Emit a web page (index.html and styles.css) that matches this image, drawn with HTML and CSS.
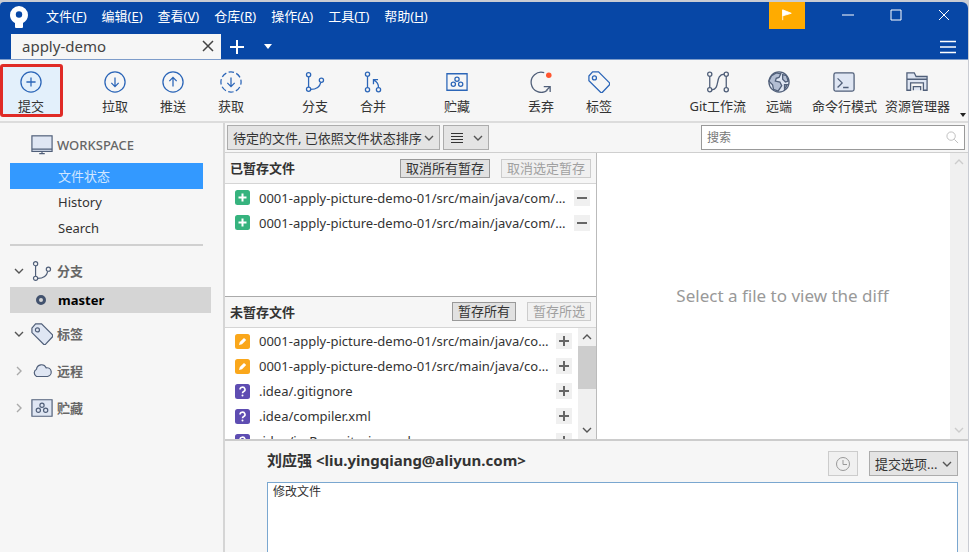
FILE: index.html
```html
<!DOCTYPE html>
<html lang="zh-CN">
<head>
    <meta charset="UTF-8">
    <meta name="viewport" content="width=device-width, initial-scale=1.0">
    <title>apply-demo</title>
    <link rel="stylesheet" href="styles.css">
</head>
<body>
    <svg class="sprite" aria-hidden="true">
        <symbol id="branch" viewBox="0 0 24 24">
            <circle cx="5" cy="4" r="2.3"/><circle cx="5" cy="20" r="2.3"/><circle cx="19" cy="10" r="2.3"/>
            <path d="M5 6.3v11.4M7.3 20c7 0 10-3 11-7.7"/>
        </symbol>
        <symbol id="tag" viewBox="0 0 24 24">
            <path d="M1 5.500L5 1h6.500L23.500 13v2l-8 8.500H14L1 10.500z"/><circle cx="7" cy="7.500" r="2.200"/>
        </symbol>
        <symbol id="stash" viewBox="0 0 24 24">
            <path d="M1 3h22v18H1z"/>
            <circle cx="12" cy="9" r="2.300"/><circle cx="8" cy="14.500" r="2.300"/><circle cx="16" cy="14.500" r="2.300"/>
        </symbol>
        <symbol id="chevron" viewBox="0 0 10 10"><path d="M1 3l4 4 4-4"/></symbol>
        <symbol id="added" viewBox="0 0 15 15">
            <rect width="15" height="15" rx="2.500" fill="#36b37e"/><path d="M7.500 3.500v8M3.500 7.500h8" stroke="#fff" stroke-width="2"/>
        </symbol>
        <symbol id="modified" viewBox="0 0 15 15">
            <rect width="15" height="15" rx="2.500" fill="#faa71b"/><path d="M4 11l.8-3L9 3.900l2.200 2.200L7 10.300z" fill="#fff"/>
        </symbol>
        <symbol id="unknown" viewBox="0 0 15 15">
            <rect width="15" height="15" rx="2.500" fill="#5e4db2"/>
            <path d="M5 5.500a2.500 2.300 0 1 1 3.700 2Q7.500 8 7.500 9.300" stroke="#fff" stroke-width="1.600" fill="none"/><circle cx="7.500" cy="11.600" r="1" fill="#fff"/>
        </symbol>
        <symbol id="plus" viewBox="0 0 12 12"><path d="M6 1v10M1 6h10"/></symbol>
    </svg>

    <div class="window">
        <header class="titlebar">
            <div class="menu-row">
                <svg class="logo" viewBox="0 0 18 22"><path d="M9 0a9 9 0 0 0-9 9c0 4 2.500 6.600 5 8v4q0 1 1 1h6q1 0 1-1v-4c3-1.500 5-4.500 5-8a9 9 0 0 0-9-9z" fill="#fff"/><circle cx="9" cy="8.500" r="3.200" fill="#0747a6"/></svg>
                <nav class="menu">
                    <a href="#">文件(<u>F</u>)</a>
                    <a href="#">编辑(<u>E</u>)</a>
                    <a href="#">查看(<u>V</u>)</a>
                    <a href="#">仓库(<u>R</u>)</a>
                    <a href="#">操作(<u>A</u>)</a>
                    <a href="#">工具(<u>T</u>)</a>
                    <a href="#">帮助(<u>H</u>)</a>
                </nav>
                <div class="window-buttons">
                    <button class="flag" aria-label="通知"><svg viewBox="0 0 12 14"><path d="M1 1v12" stroke="#fff"/><path d="M1 1l10 4L1 8z" fill="#fff"/></svg></button>
                    <button aria-label="最小化"><svg viewBox="0 0 12 12"><path d="M0 6h12"/></svg></button>
                    <button aria-label="最大化"><svg viewBox="0 0 12 12"><path d="M1 1h10v10H1z"/></svg></button>
                    <button aria-label="关闭"><svg viewBox="0 0 12 12"><path d="M1 1l10 10M11 1L1 11"/></svg></button>
                </div>
            </div>
            <div class="tab-row">
                <div class="tab">
                    <span>apply-demo</span>
                    <button aria-label="关闭标签页"><svg viewBox="0 0 12 12"><path d="M1 1l10 10M11 1L1 11"/></svg></button>
                </div>
                <button class="tab-add" aria-label="新建标签页"><svg viewBox="0 0 14 14"><path d="M7 0v14M0 7h14"/></svg></button>
                <button class="tab-more" aria-label="更多标签页"><svg viewBox="0 0 8 5"><path d="M0 0h8L4 5z"/></svg></button>
                <button class="hamburger" aria-label="菜单"><svg viewBox="0 0 16 14"><path d="M0 1.500h16M0 7h16M0 12.500h16"/></svg></button>
            </div>
        </header>

        <div class="toolbar">
            <div class="tool-group">
                <button class="tool active"><svg viewBox="0 0 24 24"><circle cx="12" cy="12" r="11"/><path d="M12 7v10M7 12h10"/></svg>提交</button>
            </div>
            <div class="tool-group">
                <button class="tool"><svg viewBox="0 0 24 24"><circle cx="12" cy="12" r="11"/><path d="M12 7v10M8 13l4 4 4-4"/></svg>拉取</button>
                <button class="tool"><svg viewBox="0 0 24 24"><circle cx="12" cy="12" r="11"/><path d="M12 17V7M8 11l4-4 4 4"/></svg>推送</button>
                <button class="tool"><svg viewBox="0 0 24 24"><circle cx="12" cy="12" r="11" stroke-dasharray="6 2.640" stroke-dashoffset="3"/><path d="M12 7v10M8 13l4 4 4-4"/></svg>获取</button>
            </div>
            <div class="tool-group">
                <button class="tool"><svg><use href="#branch"/></svg>分支</button>
                <button class="tool"><svg viewBox="0 0 24 24"><circle cx="6" cy="3.500" r="2.300"/><circle cx="6" cy="20.500" r="2.300"/><circle cx="18" cy="20.500" r="2.300"/><path d="M6 6v12M18 18c0-4-1-6-5-8M12.500 14.500V9.500h5"/></svg>合并</button>
            </div>
            <div class="tool-group">
                <button class="tool"><svg><use href="#stash"/></svg>贮藏</button>
            </div>
            <div class="tool-group">
                <button class="tool discard"><svg viewBox="0 0 24 24"><path d="M15.500 1.800A11 11 0 1 0 19 21M15 17h7v6M22 17l-4 4"/><circle class="dot" cx="20.500" cy="4.500" r="3"/></svg>丢弃</button>
                <button class="tool"><svg><use href="#tag"/></svg>标签</button>
            </div>
            <div class="tool-group right">
                <button class="tool gray"><svg viewBox="0 0 24 24"><circle cx="3" cy="3.500" r="2.300"/><circle cx="3" cy="20.500" r="2.300"/><circle cx="21" cy="3.500" r="2.300"/><circle cx="21" cy="20.500" r="2.300"/><path d="M3 6v12M21 6v12M5.300 20.500C15 20 8 4 18.700 3.500"/></svg>Git工作流</button>
                <button class="tool gray"><svg viewBox="0 0 24 24"><circle class="fill" cx="12" cy="12" r="11"/><path class="land" d="M4 5l5-3 5 1-2 4-3 1-1 3 5 1 2 4-4 6-5-2-1-5-4-4zM16 4l4 1 2 6-3 1-3-3zM18 15l3 0-3 5z"/></svg>远端</button>
                <button class="tool gray"><svg viewBox="0 0 24 24"><rect class="fill" x="1" y="2" width="22" height="20" rx="2"/><path d="M5 8l5 5-5 5M11 18h6"/></svg>命令行模式</button>
                <button class="tool gray"><svg viewBox="0 0 24 24"><path class="fill" d="M1 21V2h8l2 4h12v15h-4v-8H5v8zM1 9h22M8 21v-4h8v4"/></svg>资源管理器</button>
                <svg class="overflow" viewBox="0 0 6 4"><path d="M0 0h6L3 4z"/></svg>
            </div>
        </div>

        <div class="main">
            <aside class="sidebar">
                <section class="workspace">
                    <h2 class="group"><svg class="icon" viewBox="0 0 24 24"><rect class="fill" x="1" y="2" width="22" height="17"/><path d="M1 16.500h22M9 21.500h6M12 19v3"/></svg>WORKSPACE</h2>
                    <a class="item selected" href="#">文件状态</a>
                    <a class="item" href="#">History</a>
                    <a class="item" href="#">Search</a>
                </section>
                <section class="refs">
                    <h2 class="group cjk"><svg class="arrow"><use href="#chevron"/></svg><svg class="icon"><use href="#branch"/></svg>分支</h2>
                    <a class="item current" href="#"><span class="ring"></span>master</a>
                    <h2 class="group cjk"><svg class="arrow"><use href="#chevron"/></svg><svg class="icon fill"><use href="#tag"/></svg>标签</h2>
                    <h2 class="group cjk"><svg class="arrow closed"><use href="#chevron"/></svg><svg class="icon" viewBox="0 0 24 24"><path class="fill" d="M6 18a4.500 4.500 0 0 1 0-8 5.500 5.500 0 0 1 10.500-1.500A4.800 4.800 0 0 1 18 18z"/></svg>远程</h2>
                    <h2 class="group cjk"><svg class="arrow closed"><use href="#chevron"/></svg><svg class="icon fill"><use href="#stash"/></svg>贮藏</h2>
                </section>
            </aside>

            <div class="content">
                <div class="filter-bar">
                    <label class="select sort"><select aria-label="排序"><option>待定的文件, 已依照文件状态排序</option></select><svg class="arrow"><use href="#chevron"/></svg></label>
                    <button class="view-mode" aria-label="视图"><svg class="lines" viewBox="0 0 12 12"><path d="M0 1.500h12M0 4.500h12M0 7.500h12M0 10.500h12"/></svg><svg class="arrow"><use href="#chevron"/></svg></button>
                    <label class="search"><input type="text" placeholder="搜索" aria-label="搜索"><svg viewBox="0 0 14 14"><circle cx="5.500" cy="5.500" r="4.500"/><path d="M9 9l4 4"/></svg></label>
                </div>

                <div class="panes">
                    <div class="files">
                        <section class="file-pane">
                            <div class="pane-head">
                                <h3>已暂存文件</h3>
                                <button>取消所有暂存</button>
                                <button disabled>取消选定暂存</button>
                            </div>
                            <div class="pane-body">
                                <ul>
                                    <li><svg class="state"><use href="#added"/></svg><span>0001-apply-picture-demo-01/src/main/java/com/example/App.java</span><button aria-label="取消暂存"><svg viewBox="0 0 12 12"><path d="M1 6h10"/></svg></button></li>
                                    <li><svg class="state"><use href="#added"/></svg><span>0001-apply-picture-demo-01/src/main/java/com/example/Main.java</span><button aria-label="取消暂存"><svg viewBox="0 0 12 12"><path d="M1 6h10"/></svg></button></li>
                                </ul>
                            </div>
                        </section>
                        <section class="file-pane">
                            <div class="pane-head">
                                <h3>未暂存文件</h3>
                                <button>暂存所有</button>
                                <button disabled>暂存所选</button>
                            </div>
                            <div class="pane-body">
                                <ul>
                                    <li><svg class="state"><use href="#modified"/></svg><span>0001-apply-picture-demo-01/src/main/java/com/example/App.java</span><button aria-label="暂存"><svg><use href="#plus"/></svg></button></li>
                                    <li><svg class="state"><use href="#modified"/></svg><span>0001-apply-picture-demo-01/src/main/java/com/example/Main.java</span><button aria-label="暂存"><svg><use href="#plus"/></svg></button></li>
                                    <li><svg class="state"><use href="#unknown"/></svg><span>.idea/.gitignore</span><button aria-label="暂存"><svg><use href="#plus"/></svg></button></li>
                                    <li><svg class="state"><use href="#unknown"/></svg><span>.idea/compiler.xml</span><button aria-label="暂存"><svg><use href="#plus"/></svg></button></li>
                                    <li><svg class="state"><use href="#unknown"/></svg><span>.idea/jarRepositories.xml</span><button aria-label="暂存"><svg><use href="#plus"/></svg></button></li>
                                </ul>
                                <div class="scrollbar">
                                    <svg class="arrow up"><use href="#chevron"/></svg>
                                    <div class="thumb"></div>
                                    <svg class="arrow down"><use href="#chevron"/></svg>
                                </div>
                            </div>
                        </section>
                    </div>
                    <div class="diff">
                        <p>Select a file to view the diff</p>
                        <div class="scrollbar disabled">
                            <svg class="arrow up"><use href="#chevron"/></svg>
                            <svg class="arrow down"><use href="#chevron"/></svg>
                        </div>
                    </div>
                </div>

                <form class="commit">
                    <div class="commit-head">
                        <label for="message">刘应强 &lt;liu.yingqiang@aliyun.com&gt;</label>
                        <button class="history" type="button" aria-label="历史消息" disabled><svg viewBox="0 0 16 16"><circle cx="8" cy="8" r="6.500"/><path d="M8 4v4.500h4"/></svg></button>
                        <span class="select options"><select aria-label="提交选项"><option>提交选项...</option></select><svg class="arrow"><use href="#chevron"/></svg></span>
                    </div>
                    <textarea id="message">修改文件</textarea>
                </form>
            </div>
        </div>
    </div>
</body>
</html>
```
FILE: styles.css
```css
* {
    margin: 0;
    padding: 0;
    box-sizing: border-box;
}

body {
    height: 100vh;
    padding: 2px 1px 0 0;
    overflow: hidden;
    background: #c9ccd3;
    font-family: "Noto Sans", "Noto Sans CJK SC", sans-serif;
    font-size: 13px;
    line-height: 18px;
    color: #333;
}

button, select, input, textarea {
    font: inherit;
    color: inherit;
}

button {
    background: none;
    border: none;
}

a {
    color: inherit;
    text-decoration: none;
}

svg {
    fill: none;
    stroke: currentColor;
    flex: none;
}

.sprite {
    position: absolute;
    width: 0;
    height: 0;
}

.window {
    display: flex;
    flex-direction: column;
    height: 100%;
    background: #f6f6f6;
    border-radius: 4px 6px 0 0;
    overflow: hidden;
}

/* title bar */
.titlebar {
    background: #0747a6;
    color: #fff;
    border-bottom: 1px solid #7d9cca;
}

.menu-row {
    display: flex;
    height: 32px;
    padding-left: 10px;
}

.logo {
    width: 18px;
    height: 22px;
    margin-top: 4px;
    stroke: none;
}

.menu {
    display: flex;
    gap: 15px;
    padding: 5px 0 0 18px;
}

.window-buttons {
    display: flex;
    margin-left: auto;
}

.window-buttons button {
    width: 48px;
    height: 27px;
}

.window-buttons svg {
    width: 12px;
    height: 12px;
}

.window-buttons .flag {
    width: 36px;
    margin-right: 19px;
    background: #ffab00;
}

.tab-row {
    display: flex;
    align-items: center;
    height: 25px;
    padding: 0 12px 0 11px;
}

.tab {
    display: flex;
    align-items: center;
    justify-content: space-between;
    width: 210px;
    height: 100%;
    padding: 0 7px 2px 11px;
    background: #f6f6f6;
    color: #444;
    font-size: 15px;
}

.tab svg {
    width: 12px;
    height: 12px;
    stroke-width: 1.5;
    display: block;
}

.tab-add {
    margin-left: 9px;
}

.tab-add svg {
    width: 14px;
    height: 14px;
    stroke-width: 2;
    display: block;
}

.tab-more {
    margin-left: 20px;
}

.tab-more svg {
    width: 8px;
    height: 5px;
    fill: #fff;
    stroke: none;
    display: block;
}

.hamburger {
    margin-left: auto;
}

.hamburger svg {
    width: 16px;
    height: 14px;
    stroke-width: 1.5;
    display: block;
}

/* toolbar */
.toolbar {
    display: flex;
    gap: 26px;
    height: 63px;
    padding: 4px 14px 0 2px;
    border-bottom: 2px solid #dcdcdc;
}

.tool-group {
    display: flex;
}

.tool {
    display: flex;
    flex-direction: column;
    align-items: center;
    gap: 4px;
    min-width: 58px;
    height: 52px;
    padding: 7px 4px 0;
    white-space: nowrap;
}

.tool svg {
    width: 22px;
    height: 22px;
    color: #2c66b8;
    stroke-width: 1.4;
}

.tool.gray svg, .tool.discard svg {
    color: #505f79;
}

.tool.active {
    position: relative;
    background: #e3f0fb;
}

.tool.active::after {
    content: '';
    position: absolute;
    inset: 0 -3px -1px -2px;
    border: 3px solid #e02b26;
    border-radius: 3px;
}

.dot {
    fill: #ff5630;
    stroke: none;
}

.fill {
    fill: #dfe6f3;
}

.land {
    fill: #b3bed3;
}

.tool-group.right {
    position: relative;
    margin-left: auto;
}

.overflow {
    position: absolute;
    right: -12px;
    bottom: 4px;
    width: 6px;
    height: 4px;
    fill: #222;
    stroke: none;
}

/* sidebar */
.main {
    display: flex;
    flex: 1;
    min-height: 0;
}

.sidebar {
    width: 225px;
    padding: 6px 12px 0 10px;
    border-right: 2px solid #d5d5d5;
}

.arrow {
    width: 10px;
    height: 10px;
    color: #555;
    stroke-width: 1.4;
}

.arrow.closed {
    transform: rotate(-90deg);
    color: #aaa;
}

.workspace {
    display: flex;
    flex-direction: column;
    margin-right: 8px;
    padding-bottom: 3px;
    border-bottom: 2px solid #d0d0d0;
}

.group {
    display: flex;
    align-items: center;
    height: 32px;
    padding-left: 4px;
    font-size: 13px;
    font-weight: 500;
    color: #666;
}

.group .icon {
    width: 22px;
    height: 22px;
    margin: 0 4px 0 7px;
    color: #505f79;
    stroke-width: 1.3;
}

.workspace .group {
    margin-bottom: 2px;
    padding: 0 0 0 14px;
}

.item {
    display: flex;
    align-items: center;
    height: 26px;
    padding-left: 48px;
}

.item.selected {
    background: #3399ff;
    color: #d0e6ff;
}

.refs {
    padding-top: 6px;
}

.group.cjk {
    height: 37px;
    font-weight: 700;
}

.item.current {
    gap: 12px;
    margin: -2px 0 2px;
    padding-left: 26px;
    background: #d5d5d5;
    color: #000;
    font-weight: 700;
}

.ring {
    width: 10px;
    height: 10px;
    border: 3px solid #42526e;
    border-radius: 50%;
}

/* content */
.content {
    display: flex;
    flex-direction: column;
    flex: 1;
    min-width: 0;
}

.filter-bar {
    display: flex;
    gap: 3px;
    height: 30px;
    padding: 2px 3px 2px 2px;
    border-bottom: 1px solid #cfcfcf;
}

.select {
    display: flex;
    align-items: center;
    position: relative;
    background: #e4e4e4;
    border: 1px solid #acacac;
}

.select select {
    appearance: none;
    width: 100%;
    height: 100%;
    padding-left: 5px;
    background: none;
    border: none;
}

.select .arrow {
    position: absolute;
    right: 5px;
    pointer-events: none;
}

.sort {
    width: 213px;
}

.view-mode {
    display: flex;
    align-items: center;
    justify-content: space-between;
    width: 46px;
    padding: 0 5px 0 7px;
    background: #e4e4e4;
    border: 1px solid #acacac;
}

.lines {
    width: 12px;
    height: 12px;
}

.search {
    display: flex;
    align-items: center;
    width: 264px;
    margin-left: auto;
    padding: 0 5px;
    background: #fff;
    border: 1px solid #999;
}

.search input {
    flex: 1;
    min-width: 0;
    border: none;
    outline: none;
    font-size: 12px;
}

.search input::placeholder {
    color: #777;
}

.search svg {
    width: 13px;
    height: 13px;
    color: #bbb;
}

.panes {
    display: flex;
    flex: 1;
    min-height: 0;
}

.files {
    display: flex;
    flex-direction: column;
    flex: 1;
    min-width: 0;
    border-right: 1px solid #bbb;
}

.file-pane {
    display: flex;
    flex-direction: column;
    flex: 1;
    min-height: 0;
}

.file-pane + .file-pane {
    border-top: 1px solid #aaa;
}

.pane-head {
    display: flex;
    align-items: center;
    gap: 11px;
    height: 31px;
    padding: 0 5px;
    border-bottom: 1px solid #d5d5d5;
}

.pane-head h3 {
    margin-right: auto;
    font-size: 13px;
}

.pane-head button {
    padding: 0 5px;
    background: #e1e1e1;
    border: 1px solid #999;
    line-height: 17px;
}

.pane-head button:disabled {
    background: #f0f0f0;
    border-color: #ccc;
    color: #a0a0a0;
}

.pane-body {
    display: flex;
    flex: 1;
    min-height: 0;
    overflow: hidden;
    background: #fff;
}

.pane-body ul {
    flex: 1;
    min-width: 0;
    padding: 1px 6px 0 10px;
    list-style: none;
}

.pane-body li {
    display: flex;
    align-items: center;
    height: 25px;
}

.pane-body li span {
    flex: 1;
    margin: 0 3px 0 9px;
    overflow: hidden;
    white-space: nowrap;
    text-overflow: ellipsis;
}

.state {
    width: 15px;
    height: 15px;
    stroke: none;
}

.pane-body li button {
    width: 16px;
    height: 16px;
    background: #f0f0f0;
}

.pane-body li button svg {
    display: block;
    width: 12px;
    height: 12px;
    margin: 0 auto;
    color: #666;
    stroke-width: 2;
}

.scrollbar {
    display: flex;
    flex-direction: column;
    align-items: center;
    width: 18px;
    padding: 4px 0;
    background: #f0f0f0;
}

.scrollbar .up {
    transform: rotate(180deg);
}

.scrollbar .down {
    margin-top: auto;
}

.scrollbar.disabled .arrow {
    color: #ccc;
}

.thumb {
    width: 100%;
    height: 43px;
    margin-top: 4px;
    background: #cdcdcd;
}

.diff {
    display: flex;
    flex: 1;
    background: #fff;
}

.diff p {
    flex: 1;
    align-self: center;
    padding-left: 18px;
    text-align: center;
    font-size: 17px;
    color: #999;
}

/* commit form */
.commit {
    padding: 10px 10px 0 42px;
    border-top: 2px solid #ccc;
}

.commit-head {
    display: flex;
    height: 25px;
    margin-bottom: 6px;
}

.commit-head label {
    margin-right: auto;
    font-size: 15px;
    font-weight: 700;
}

.history {
    width: 30px;
    margin-right: 11px;
    background: #f0f0f0;
    border: 1px solid #ccc;
}

.history svg {
    display: block;
    width: 16px;
    height: 16px;
    margin: 0 auto;
    color: #999;
}

.options {
    width: 89px;
}

.commit textarea {
    display: block;
    width: 100%;
    height: 70px;
    padding: 0 5px;
    border: 1px solid #7aa7d0;
    border-bottom: none;
    background: #fff;
    outline: none;
    resize: none;
    font-size: 12px;
}
```
